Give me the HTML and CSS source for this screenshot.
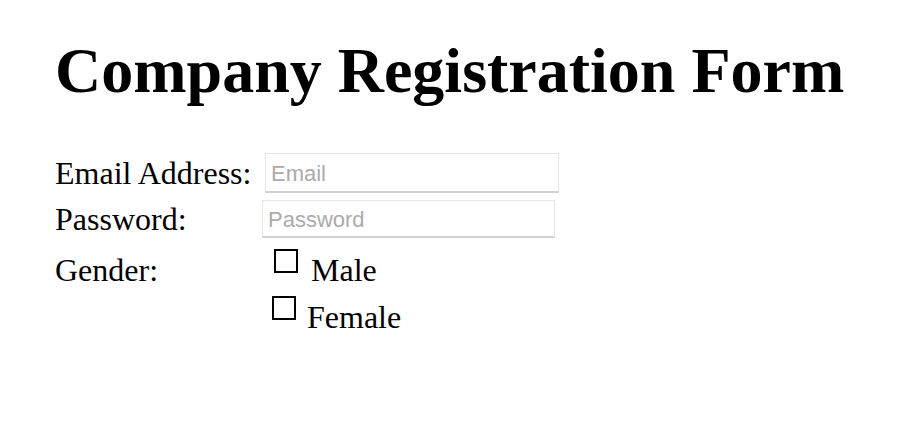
FILE: index.html
```html
<!DOCTYPE html>
<html>
<head>
<meta charset="utf-8">
<link rel="stylesheet" href="styles.css">
</head>
<body>
<div class="page">
  <h1 class="title">Company Registration Form</h1>
  <form class="form">
    <label class="label row-email" for="email">Email Address:</label>
    <div class="field row-email"><input id="email" class="text-input email-input" type="email" placeholder="Email"></div>
    <label class="label row-pass" for="pass">Password:</label>
    <div class="field row-pass"><input id="pass" class="text-input pass-input" type="password" placeholder="Password"></div>
    <div class="label row-gender">Gender:</div>
    <div class="field options">
      <label class="option option-male"><input class="check" type="checkbox"> Male</label>
      <label class="option option-female"><input class="check" type="checkbox"> Female</label>
    </div>
  </form>
</div>
</body>
</html>
```

FILE: styles.css
```css
html, body {
  margin: 0;
  padding: 0;
  background: #fff;
}
body {
  font-family: "Liberation Serif", "Times New Roman", serif;
  color: #000;
}
.page {
  padding: 34px 0 0 55px;
}
.title {
  font-size: 64px;
  font-weight: bold;
  margin: 0 0 45px 0;
  line-height: 1.15;
}
.form {
  display: grid;
  grid-template-columns: 207px auto;
  align-items: start;
  font-size: 32px;
}
.label {
  white-space: nowrap;
}
.row-email {
  height: 40px;
  line-height: 40px;
}
.row-pass {
  height: 38px;
  line-height: 38px;
  margin-top: 7px;
}
.row-gender {
  line-height: 47px;
  margin-top: 9px;
}
.text-input {
  box-sizing: border-box;
  border: 1px solid #e6e6e6;
  border-bottom: 2px solid #d0d0d0;
  border-radius: 0;
  background: #fff;
  font-family: "Liberation Sans", Arial, sans-serif;
  font-size: 22px;
  padding: 3px 0 0 5px;
  margin: 0;
  outline: none;
  vertical-align: top;
}
.text-input::placeholder {
  color: #ababab;
}
.email-input {
  width: 294px;
  height: 40px;
  margin-left: 3px;
}
.pass-input {
  width: 293px;
  height: 38px;
}
.options {
  margin-top: 9px;
  display: flex;
  flex-direction: column;
  align-items: flex-start;
}
.option {
  line-height: 47px;
  white-space: nowrap;
}
.option-male {
  padding-left: 12px;
}
.option-female {
  padding-left: 10px;
}
.option-female .check {
  margin-right: 3px;
}
.check {
  appearance: none;
  -webkit-appearance: none;
  box-sizing: border-box;
  width: 24px;
  height: 24px;
  border: 2px solid #000;
  background: #fff;
  margin: 0 5px 8px 0;
  vertical-align: baseline;
  display: inline-block;
}
```
